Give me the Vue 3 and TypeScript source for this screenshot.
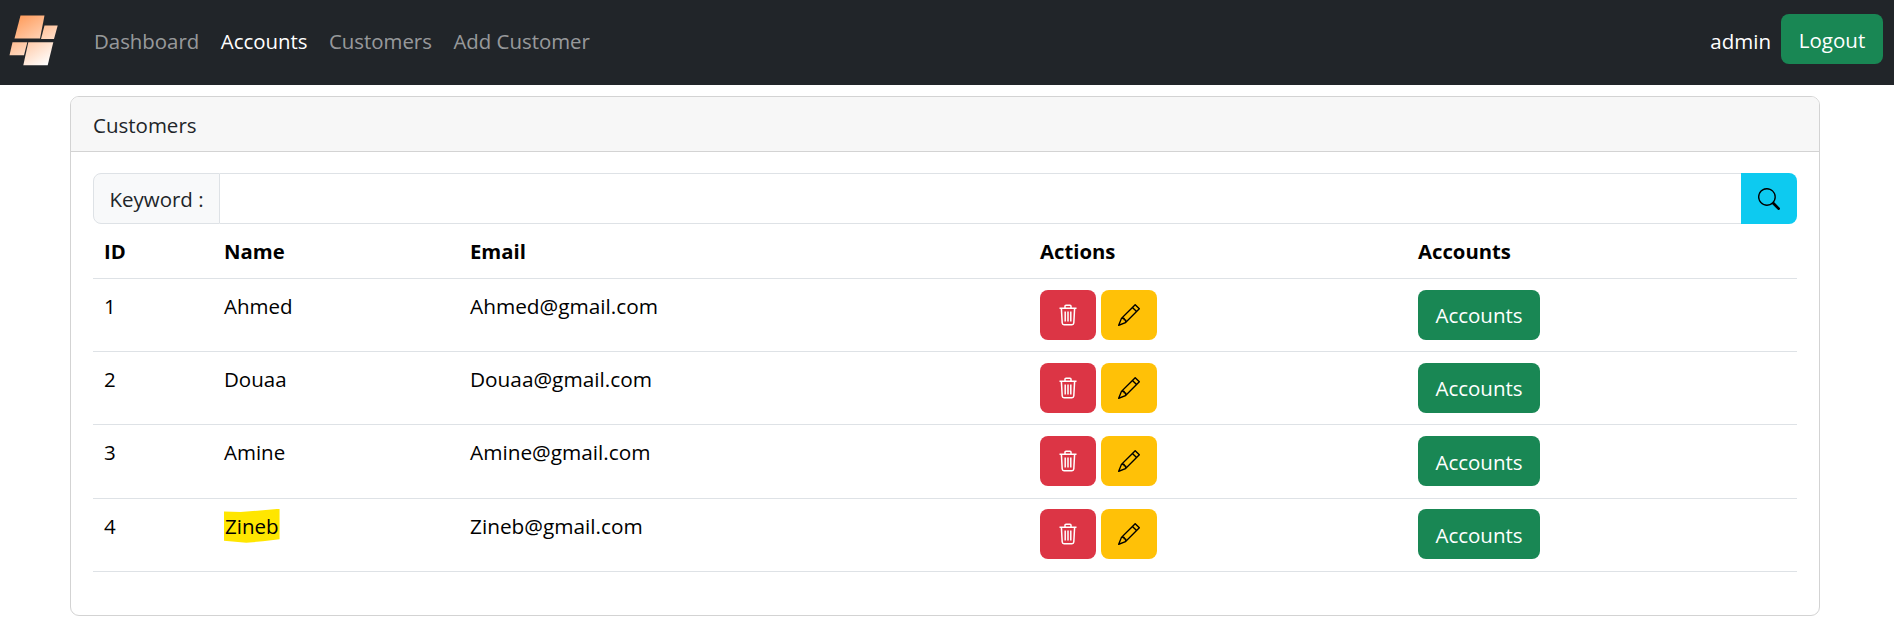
<script setup lang="ts">
interface Customer { id: number; name: string; email: string; mark?: boolean }
const customers: Customer[] = [
  { id: 1, name: 'Ahmed', email: 'Ahmed@gmail.com' },
  { id: 2, name: 'Douaa', email: 'Douaa@gmail.com' },
  { id: 3, name: 'Amine', email: 'Amine@gmail.com' },
  { id: 4, name: 'Zineb', email: 'Zineb@gmail.com', mark: true },
]
const links = [
  { label: 'Dashboard', active: false },
  { label: 'Accounts', active: true },
  { label: 'Customers', active: false },
  { label: 'Add Customer', active: false },
]
</script>

<template>
  <div class="page">
    <nav class="navbar">
      <svg class="logo" viewBox="0 0 60 70" width="60" height="70" aria-hidden="true">
        <defs>
          <linearGradient id="lg" gradientUnits="userSpaceOnUse" x1="14" y1="14" x2="46" y2="66">
            <stop offset="0" stop-color="#ff9550" />
            <stop offset="1" stop-color="#ffffff" />
          </linearGradient>
        </defs>
        <g fill="url(#lg)">
          <polygon points="20.5,15.5 44.5,15.5 40,38.5 14.5,38.5" />
          <polygon points="44.5,25.5 57.7,25.5 54,39 41,39" />
          <polygon points="12.5,42.3 27.3,42.3 24,55.3 9.5,55.3" />
          <polygon points="28.3,42.3 53.3,42.3 47.7,65.3 23.3,65.3" />
        </g>
      </svg>
      <ul class="links">
        <li v-for="l in links" :key="l.label" class="link" :class="{ active: l.active }">{{ l.label }}</li>
      </ul>
      <div class="user">
        <span class="admin">admin</span>
        <button class="btn green logout">Logout</button>
      </div>
    </nav>

    <section class="card">
      <header class="card-header">Customers</header>
      <div class="card-body">
        <div class="input-group">
          <span class="addon">Keyword :</span>
          <input class="field" type="text" />
          <button class="search" aria-label="Search">
            <svg viewBox="0 0 16 16" width="22" height="22" fill="currentColor"><path d="M11.742 10.344a6.5 6.5 0 1 0-1.397 1.398h-.001c.03.04.062.078.098.115l3.85 3.85a1 1 0 0 0 1.415-1.414l-3.85-3.85a1.007 1.007 0 0 0-.115-.1zM12 6.5a5.5 5.5 0 1 1-11 0 5.5 5.5 0 0 1 11 0z"/></svg>
          </button>
        </div>
        <table class="table">
          <colgroup>
            <col class="c1" /><col class="c2" /><col class="c3" /><col class="c4" /><col class="c5" />
          </colgroup>
          <thead>
            <tr><th>ID</th><th>Name</th><th>Email</th><th>Actions</th><th>Accounts</th></tr>
          </thead>
          <tbody>
            <tr v-for="c in customers" :key="c.id">
              <td class="text">{{ c.id }}</td>
              <td class="text"><span :class="{ marker: c.mark }">{{ c.name }}</span></td>
              <td class="text email">{{ c.email }}</td>
              <td>
                <div class="actions">
                  <button class="btn square red" aria-label="Delete">
                    <svg viewBox="0 0 20 22" width="20" height="22" fill="none" stroke="currentColor" stroke-width="1.5"><path d="M1.5 4.2h17M7 4V2.2c0-.6.4-1 1-1h4c.6 0 1 .4 1 1V4" /><path d="M3.4 4.4l.8 14.6c.1 1 .8 1.7 1.8 1.7h8c1 0 1.7-.7 1.8-1.7l.8-14.6" /><path d="M7.2 7.5v10M10 7.5v10M12.8 7.5v10" /></svg>
                  </button>
                  <button class="btn square yellow" aria-label="Edit">
                    <svg viewBox="0 0 16 16" width="22" height="22" fill="currentColor"><path d="M12.146.146a.5.5 0 0 1 .708 0l3 3a.5.5 0 0 1 0 .708l-10 10a.5.5 0 0 1-.168.11l-5 2a.5.5 0 0 1-.65-.65l2-5a.5.5 0 0 1 .11-.168zM11.207 2.5 13.5 4.793 14.793 3.5 12.5 1.207zm1.586 3L10.5 3.207 4 9.707V10h.5a.5.5 0 0 1 .5.5v.5h.5a.5.5 0 0 1 .5.5v.5h.293zm-9.761 5.175-.106.106-1.528 3.821 3.821-1.528.106-.106A.5.5 0 0 1 5 12.5V12h-.5a.5.5 0 0 1-.5-.5V11h-.5a.5.5 0 0 1-.468-.325"/></svg>
                  </button>
                </div>
              </td>
              <td><button class="btn green accounts">Accounts</button></td>
            </tr>
          </tbody>
        </table>
      </div>
    </section>
  </div>
</template>

<style>
html, body { margin: 0; background: #fff; }
</style>

<style scoped>
.page {
  font-family: "Open Sans", "Noto Sans", sans-serif;
  font-size: 20.5px;
  line-height: 32px;
  color: #212529;
}
.navbar {
  height: 85px;
  box-sizing: border-box;
  background: #212529;
  display: flex;
  align-items: flex-start;
  padding: 0 11px 0 0;
}
.logo { flex: none; margin: 0 14px 0 0; display: block; }
.links {
  display: flex;
  list-style: none;
  margin: 0;
  padding: 25px 0 0 20px;
  gap: 21.5px;
  font-size: 20.4px;
}
.link { color: rgba(255, 255, 255, 0.55); }
.link.active { color: #fff; }
.user { margin-left: auto; display: flex; align-items: flex-start; gap: 10px; padding-top: 14px; }
.admin { color: #fff; margin-top: 11px; }
.btn {
  font: inherit;
  border: 0;
  border-radius: 8px;
  height: 50px;
  padding: 0;
  display: flex;
  align-items: center;
  justify-content: center;
  cursor: pointer;
}
.green { background: #198754; color: #fff; }
.logout, .accounts { padding-top: 1px; }
.red { background: #dc3545; color: #fff; }
.yellow { background: #ffc107; color: #000; }
.logout { width: 102px; }
.accounts { width: 122px; }
.square { width: 56px; }
.card {
  margin: 11px 74px 0 70px;
  border: 1px solid #d3d3d3;
  border-radius: 9px;
  overflow: hidden;
  height: 520px;
  box-sizing: border-box;
}
.card-header {
  height: 55px;
  box-sizing: border-box;
  padding: 12px 22px 0;
  background: #f7f7f7;
  border-bottom: 1px solid #d3d3d3;
}
.card-body { padding: 21px 22px 0; }
.input-group { display: flex; height: 51px; }
.addon {
  flex: none;
  width: 127px;
  box-sizing: border-box;
  background: #f8f9fa;
  border: 1px solid #dee2e6;
  border-radius: 8px 0 0 8px;
  display: flex;
  align-items: center;
  justify-content: center;
}
.field {
  flex: 1;
  min-width: 0;
  border: 1px solid #dee2e6;
  border-left: 0;
  border-right: 0;
  padding: 0;
  outline: none;
}
.search {
  flex: none;
  width: 56px;
  border: 0;
  padding: 0;
  background: #0dcaf0;
  color: #000;
  border-radius: 0 8px 8px 0;
  display: flex;
  align-items: center;
  justify-content: center;
}
.table {
  width: 100%;
  border-collapse: collapse;
  table-layout: fixed;
  color: #000;
}
.c1 { width: 120px; }
.c2 { width: 246px; }
.c3 { width: 570px; }
.c4 { width: 378px; }
th, td {
  text-align: left;
  vertical-align: top;
  padding: 10.6px 11px 11.65px;
  border-bottom: 1px solid #dee2e6;
}
th { font-weight: 700; font-size: 20.3px; padding-top: 11px; padding-bottom: 11px; }
td.text { padding-top: 11px; }
td.email { font-size: 20.8px; }
.actions { display: flex; gap: 5px; }
.marker {
  background: #ffe600;
  padding: 3px 1px;
  clip-path: polygon(0 8%, 30% 10%, 60% 6%, 100% 0, 100% 90%, 70% 96%, 40% 100%, 0 94%);
}
</style>
